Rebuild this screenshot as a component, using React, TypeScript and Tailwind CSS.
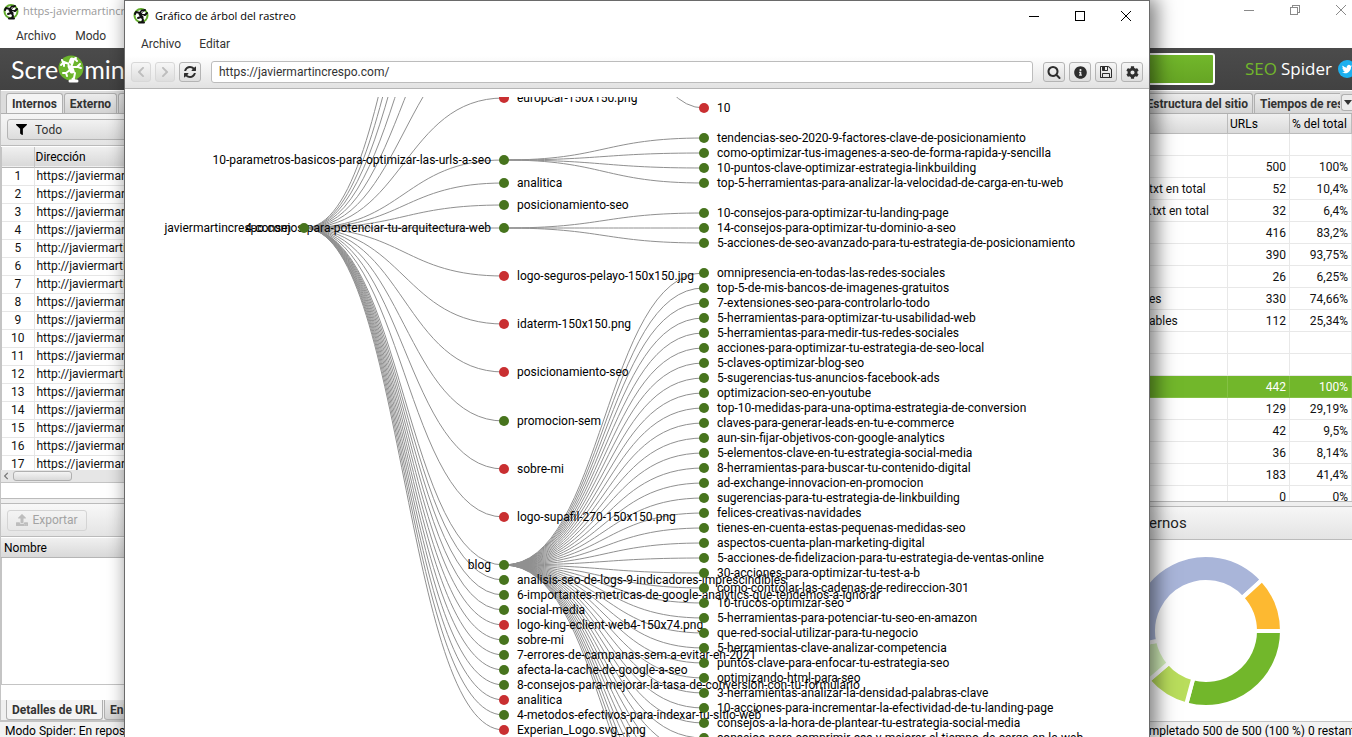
import { useState, type ReactNode } from "react";
import { FaChevronLeft, FaChevronRight, FaCog, FaFilter, FaInfoCircle, FaUpload } from "react-icons/fa";

type Status = "ok" | "error";
type TreeNode = { label: string; y: number; status?: Status; children?: TreeNode[] };

const ROW = 15;

// Builds evenly spaced leaves, starting at the given y
function leaves(start: number, labels: string[]): TreeNode[] {
  return labels.map((label, i) => ({ label, y: start + i * ROW }));
}

const BLOG_POSTS = [
  "omnipresencia-en-todas-las-redes-sociales",
  "top-5-de-mis-bancos-de-imagenes-gratuitos",
  "7-extensiones-seo-para-controlarlo-todo",
  "5-herramientas-para-optimizar-tu-usabilidad-web",
  "5-herramientas-para-medir-tus-redes-sociales",
  "acciones-para-optimizar-tu-estrategia-de-seo-local",
  "5-claves-optimizar-blog-seo",
  "5-sugerencias-tus-anuncios-facebook-ads",
  "optimizacion-seo-en-youtube",
  "top-10-medidas-para-una-optima-estrategia-de-conversion",
  "claves-para-generar-leads-en-tu-e-commerce",
  "aun-sin-fijar-objetivos-con-google-analytics",
  "5-elementos-clave-en-tu-estrategia-social-media",
  "8-herramientas-para-buscar-tu-contenido-digital",
  "ad-exchange-innovacion-en-promocion",
  "sugerencias-para-tu-estrategia-de-linkbuilding",
  "felices-creativas-navidades",
  "tienes-en-cuenta-estas-pequenas-medidas-seo",
  "aspectos-cuenta-plan-marketing-digital",
  "5-acciones-de-fidelizacion-para-tu-estrategia-de-ventas-online",
  "30-acciones-para-optimizar-tu-test-a-b",
  "como-controlar-las-cadenas-de-redireccion-301",
  "10-trucos-optimizar-seo",
  "5-herramientas-para-potenciar-tu-seo-en-amazon",
  "que-red-social-utilizar-para-tu-negocio",
  "5-herramientas-clave-analizar-competencia",
  "puntos-clave-para-enfocar-tu-estrategia-seo",
  "optimizando-html-para-seo",
  "3-herramientas-analizar-la-densidad-palabras-clave",
  "10-acciones-para-incrementar-la-efectividad-de-tu-landing-page",
  "consejos-a-la-hora-de-plantear-tu-estrategia-social-media",
  "consejos-para-comprimir-css-y-mejorar-el-tiempo-de-carga-en-la-web",
];

// Links that run to nodes scrolled out of view
const ROOT_OFFSCREEN = [-61, -124, -187, -249, -310, -372];
const BLOG_OFFSCREEN = [656, 671, 686, 701, 716, 731, 746, 761];

const ROOT: TreeNode = {
  label: "javiermartincrespo.com",
  y: 131,
  children: [
    { label: "europcar-150x150.png", y: 1, status: "error" },
    {
      label: "10-parametros-basicos-para-optimizar-las-urls-a-seo",
      y: 63,
      children: leaves(41, [
        "tendencias-seo-2020-9-factores-clave-de-posicionamiento",
        "como-optimizar-tus-imagenes-a-seo-de-forma-rapida-y-sencilla",
        "10-puntos-clave-optimizar-estrategia-linkbuilding",
        "top-5-herramientas-para-analizar-la-velocidad-de-carga-en-tu-web",
      ]),
    },
    { label: "analitica", y: 86 },
    { label: "posicionamiento-seo", y: 108 },
    {
      label: "4-consejos-para-potenciar-tu-arquitectura-web",
      y: 131,
      children: leaves(116, [
        "10-consejos-para-optimizar-tu-landing-page",
        "14-consejos-para-optimizar-tu-dominio-a-seo",
        "5-acciones-de-seo-avanzado-para-tu-estrategia-de-posicionamiento",
      ]),
    },
    { label: "logo-seguros-pelayo-150x150.jpg", y: 179, status: "error" },
    { label: "idaterm-150x150.png", y: 227, status: "error" },
    { label: "posicionamiento-seo", y: 275, status: "error" },
    { label: "promocion-sem", y: 324 },
    { label: "sobre-mi", y: 372, status: "error" },
    { label: "logo-supafil-270-150x150.png", y: 420, status: "error" },
    { label: "blog", y: 468, children: leaves(176, BLOG_POSTS) },
    { label: "analisis-seo-de-logs-9-indicadores-imprescindibles", y: 483 },
    { label: "6-importantes-metricas-de-google-analytics-que-tendemos-a-ignorar", y: 498 },
    { label: "social-media", y: 513 },
    { label: "logo-king-eclient-web4-150x74.png", y: 528, status: "error" },
    { label: "sobre-mi", y: 543 },
    { label: "7-errores-de-campanas-sem-a-evitar-en-2021", y: 558 },
    { label: "afecta-la-cache-de-google-a-seo", y: 573 },
    { label: "8-consejos-para-mejorar-la-tasa-de-conversion-con-tu-formulario", y: 588 },
    { label: "analitica", y: 603, status: "error" },
    { label: "4-metodos-efectivos-para-indexar-tu-sitio-web", y: 618 },
    { label: "Experian_Logo.svg_.png", y: 633, status: "error" },
  ],
};

const COLUMN_X = [179, 379, 579];

function Link({ depth, from, to }: { depth: number; from: number; to: number }) {
  const x0 = COLUMN_X[depth];
  const x1 = COLUMN_X[depth + 1];
  const mid = (x0 + x1) / 2;
  return <path d={`M${x0},${from}C${mid},${from} ${mid},${to} ${x1},${to}`} />;
}

function Node({ node, depth }: { node: TreeNode; depth: number }) {
  const x = COLUMN_X[depth];
  const parent = Boolean(node.children);
  return (
    <g>
      <circle cx={x} cy={node.y} r={5} fill={node.status === "error" ? "#c92f31" : "#47741d"} />
      <text x={parent ? x - 13 : x + 13} y={node.y + 4} textAnchor={parent ? "end" : "start"}>
        {node.label}
      </text>
    </g>
  );
}

function CrawlTree() {
  const children = ROOT.children ?? [];
  return (
    <svg className="block h-full w-full text-xs" role="img" aria-label="Gráfico de árbol del rastreo">
      <g fill="none" stroke="#909090" strokeWidth={1}>
        {ROOT_OFFSCREEN.map((y) => (
          <Link key={y} depth={0} from={ROOT.y} to={y} />
        ))}
        {children.map((c) => (
          <Link key={c.y} depth={0} from={ROOT.y} to={c.y} />
        ))}
        {children.flatMap((c) =>
          (c.children ?? []).map((l) => <Link key={l.y} depth={1} from={c.y} to={l.y} />),
        )}
        {BLOG_OFFSCREEN.map((y) => (
          <Link key={y} depth={1} from={468} to={y} />
        ))}
        <Link depth={1} from={-372} to={11} />
      </g>
      <g fill="#000">
        {children.map((c) => (
          <Node key={c.y} node={c} depth={1} />
        ))}
        <Node node={ROOT} depth={0} />
        <Node node={{ label: "10", y: 11, status: "error" }} depth={2} />
        {children.flatMap((c) => (c.children ?? []).map((l) => <Node key={l.y} node={l} depth={2} />))}
      </g>
    </svg>
  );
}

// White frog climbing over the green disc of the logo
function FrogMark({ className }: { className: string }) {
  return (
    <svg viewBox="0 0 26 28" className={className} aria-hidden="true">
      <circle cx="13" cy="13" r="12.5" fill="#6cb52d" />
      <g fill="none" stroke="#fff" strokeLinecap="round" strokeLinejoin="round">
        <path d="M14 5l-2 6 2 5" strokeWidth="5" />
        <path d="M11 9L6 7l-3 3M5 7L4 5M6 8l0 3" strokeWidth="2" />
        <path d="M14 12l5 0 3-3M20 12l3 1M14 5l4-2M17 4l2 2" strokeWidth="2" />
        <path d="M12 15l-4 3 1 3M8 18l-3 0M14 16l3 2-1 5" strokeWidth="2" />
        <path d="M12 26l7 0M15 24l1 1" strokeWidth="3" />
      </g>
      <path d="M11 8l2 1-1 2zM12 19l2 0-1 3-3 1z" fill="#6cb52d" />
    </svg>
  );
}

// Small frog of the title bars: black silhouette inside a broken green ring
function AppIcon() {
  return (
    <svg viewBox="0 0 16 16" className="h-4 w-4 shrink-0" aria-hidden="true">
      <circle cx="8" cy="7.500" r="6.500" fill="#fff" stroke="#62ad2b" strokeWidth="2" />
      <g fill="none" stroke="#111" strokeLinecap="round" strokeLinejoin="round">
        <path d="M9 3L7 6l2 3" strokeWidth="3" />
        <path d="M7 5L3 4 2 6M9 7l3 0 2-2M9 3l3-1" strokeWidth="2" />
        <path d="M8 9l-3 1M9 9l1 3-1 2M6 14.500l5 0" strokeWidth="2" />
      </g>
      <path d="M8 4l2-1-1 2zM9 7l2 0-1 1z" fill="#fff" />
    </svg>
  );
}

function Glyph({ d, className = "h-4 w-4" }: { d: string; className?: string }) {
  return (
    <svg viewBox="0 0 1792 1792" fill="currentColor" className={className} aria-hidden="true">
      <path d={d} />
    </svg>
  );
}

const REFRESH =
  "M1639 1056q0 5-1 7-64 268-268 434.5t-478 166.5q-146 0-282.5-55t-243.5-157l-129 129q-19 19-45 19t-45-19-19-45v-448q0-26 19-45t45-19h448q26 0 45 19t19 45-19 45l-137 137q71 66 161 102t187 36q134 0 250-65t186-179q11-17 53-117 8-23 30-23h192q13 0 22.5 9.5t9.5 22.5zm25-800v448q0 26-19 45t-45 19h-448q-26 0-45-19t-19-45 19-45l138-138q-148-137-349-137-134 0-250 65t-186 179q-11 17-53 117-8 23-30 23h-199q-13 0-22.5-9.5t-9.5-22.5v-7q65-268 270-434.5t480-166.5q146 0 284 55.5t245 156.5l130-129q19-19 45-19t45 19 19 45z";
const SEARCH =
  "M1216 832q0-185-131.5-316.5t-316.5-131.5-316.5 131.5-131.5 316.5 131.5 316.5 316.5 131.5 316.5-131.5 131.5-316.5zm512 832q0 52-38 90t-90 38q-54 0-90-38l-343-342q-179 124-399 124-143 0-273.5-55.5t-225-150-150-225-55.5-273.5 55.5-273.5 150-225 225-150 273.5-55.5 273.5 55.5 225 150 150 225 55.5 273.5q0 220-124 399l343 343q37 37 37 90z";
const FLOPPY =
  "M512 1536h768v-384h-768v384zm896 0h128v-896q0-14-10-38.5t-20-34.5l-281-281q-10-10-34-20t-39-10v416q0 40-28 68t-68 28h-576q-40 0-68-28t-28-68v-416h-128v1280h128v-416q0-40 28-68t68-28h832q40 0 68 28t28 68v416zm-384-928v-320q0-13-9.5-22.5t-22.5-9.5h-192q-13 0-22.5 9.5t-9.5 22.5v320q0 13 9.5 22.5t22.5 9.5h192q13 0 22.5-9.5t9.5-22.5zm640 32v928q0 40-28 68t-68 28h-1344q-40 0-68-28t-28-68v-1344q0-40 28-68t68-28h928q40 0 88 20t76 48l280 280q28 28 48 76t20 88z";

function ToolButton({ label, disabled, children }: { label: string; disabled?: boolean; children: ReactNode }) {
  return (
    <button
      type="button"
      aria-label={label}
      disabled={disabled}
      className="flex h-5 w-[22px] items-center justify-center rounded-[3px] border border-[#b4b4b4] bg-linear-to-b from-[#f6f6f6] to-[#dedede] text-[#2e2e2e] disabled:w-5 disabled:border-[#d8d8d8] disabled:text-[#bdbdbd]"
    >
      {children}
    </button>
  );
}

function WindowButtons({ restored, className }: { restored?: boolean; className: string }) {
  return (
    <div className={className}>
      <button type="button" aria-label="Minimizar" className="flex w-[46px] items-center justify-center">
        <svg viewBox="0 0 12 12" className="h-3 w-3" stroke="currentColor" shapeRendering="crispEdges">
          <path d="M1 6.500h10" />
        </svg>
      </button>
      <button type="button" aria-label="Maximizar" className="flex w-[46px] items-center justify-center">
        <svg viewBox="0 0 12 12" className="h-3 w-3" stroke="currentColor" fill="none" shapeRendering="crispEdges">
          {restored ? <path d="M1.500 3.500h7v7h-7zM3.500 3.500v-2h7v7h-2" /> : <path d="M1.500 1.500h9v9h-9z" />}
        </svg>
      </button>
      <button type="button" aria-label="Cerrar" className="flex w-[46px] items-center justify-center">
        <svg viewBox="0 0 12 12" className="h-3 w-3" stroke="currentColor">
          <path d="M1 1l10 10M11 1L1 11" />
        </svg>
      </button>
    </div>
  );
}

function TreeWindow() {
  const [url, setUrl] = useState("https://javiermartincrespo.com/");
  return (
    <section className="absolute inset-y-0 left-[124px] right-[202px] flex flex-col overflow-hidden border-x border-t border-[#6a6a6a] bg-white shadow-[5px_0_18px_2px_rgba(0,0,0,0.5)]">
      <header className="flex h-[30px] shrink-0 items-center justify-between pl-2">
        <div className="flex items-center gap-1.5">
          <AppIcon />
          <h1 className="font-['Open_Sans',sans-serif] text-[11px] text-black">Gráfico de árbol del rastreo</h1>
        </div>
        <WindowButtons className="flex text-black" />
      </header>
      <nav className="flex h-[25px] shrink-0 items-center gap-[18px] pl-4 text-[#333]">
        <button type="button">Archivo</button>
        <button type="button">Editar</button>
      </nav>
      <div className="flex h-[33px] shrink-0 items-center gap-2.5 border-b border-[#b5b5b5] bg-linear-to-b from-white to-[#e2e2e2] px-1.5">
        <div className="flex gap-1">
          <ToolButton label="Atrás" disabled>
            <FaChevronLeft className="h-3 w-3" />
          </ToolButton>
          <ToolButton label="Adelante" disabled>
            <FaChevronRight className="h-3 w-3" />
          </ToolButton>
          <ToolButton label="Recargar">
            <Glyph d={REFRESH} className="h-[14px] w-[14px]" />
          </ToolButton>
        </div>
        <input
          aria-label="Dirección"
          value={url}
          onChange={(e) => setUrl(e.target.value)}
          className="h-[22px] min-w-0 flex-1 rounded-[3px] border border-[#bcbcbc] bg-white px-[7px] text-[#333] outline-none"
        />
        <div className="flex gap-1">
          <ToolButton label="Buscar">
            <Glyph d={SEARCH} className="h-[14px] w-[14px]" />
          </ToolButton>
          <ToolButton label="Información">
            <FaInfoCircle className="h-[13px] w-[13px]" />
          </ToolButton>
          <ToolButton label="Guardar">
            <Glyph d={FLOPPY} className="h-[14px] w-[14px]" />
          </ToolButton>
          <ToolButton label="Configuración">
            <FaCog className="h-[13px] w-[13px]" />
          </ToolButton>
        </div>
      </div>
      <div className="min-h-0 flex-1 pt-2">
        <CrawlTree />
      </div>
    </section>
  );
}

const HTTP_ROWS = [5, 6, 7, 12];
const URL_ROWS = Array.from({ length: 17 }, (_, i) => ({
  id: i + 1,
  url: `${HTTP_ROWS.includes(i + 1) ? "http" : "https"}://javiermartincrespo.com/`,
}));

function Tab({ active, up, children }: { active?: boolean; up?: boolean; children: ReactNode }) {
  const tone = active ? "bg-[#f4f4f4]" : "bg-linear-to-b from-[#ececec] to-[#d4d4d4]";
  const edge = up ? "rounded-b-[3px] border-b" : "rounded-t-[3px] border-t";
  return (
    <button
      type="button"
      className={`${tone} ${edge} h-5 shrink-0 border-x border-[#b0b0b0] px-[5px] font-bold whitespace-nowrap text-[#333]`}
    >
      {children}
    </button>
  );
}

function LeftPane() {
  return (
    <div className="flex min-w-0 flex-1 flex-col overflow-hidden border-l border-[#c4c4c4]">
      <div className="flex h-6 shrink-0 items-end gap-px border-y border-t-white border-b-[#b0b0b0] bg-[#dcdcdc] pl-[5px]">
        <Tab active>Internos</Tab>
        <Tab>Externo</Tab>
        <Tab>Seguridad</Tab>
      </div>
      <div className="flex h-8 shrink-0 items-center border-b border-[#bbb] bg-linear-to-b from-[#f6f6f6] to-[#e4e4e4] px-1.5">
        <label className="flex h-[21px] w-48 items-center gap-2 rounded-[3px] border border-[#b4b4b4] bg-linear-to-b from-[#f2f2f2] to-[#dcdcdc] px-2">
          <FaFilter className="h-[11px] w-[11px] text-black" />
          <select aria-label="Filtro" className="flex-1 appearance-none bg-transparent text-[#333] outline-none">
            <option>Todo</option>
          </select>
        </label>
      </div>
      <div className="mt-px h-[323px] shrink-0 overflow-hidden border-l border-[#c4c4c4]">
        <table className="w-full table-fixed border-collapse">
          <thead>
            <tr className="h-5 border-b border-[#b5b5b5] bg-linear-to-b from-[#f0f0f0] to-[#d9d9d9] text-left text-black">
              <th className="w-8 border-r border-[#c4c4c4]" aria-label="Fila" />
              <th className="px-px py-0 font-normal">Dirección</th>
            </tr>
          </thead>
          <tbody>
            {URL_ROWS.map((row) => (
              <tr key={row.id} className="h-[18px] border-b border-[#e6e6e6] leading-4">
                <td className="border-r border-[#e6e6e6] p-0 text-center">{row.id}</td>
                <td className="p-0 pl-0.5 whitespace-nowrap">{row.url}</td>
              </tr>
            ))}
          </tbody>
        </table>
      </div>
      <div className="flex h-[13px] shrink-0 items-center gap-[3px] border-b border-[#c4c4c4] bg-[#e6e6e6] pl-px text-[#777]">
        <FaChevronLeft className="h-2 w-2" />
        <div className="h-[10px] w-[59px] rounded-[3px] border border-[#b0b0b0] bg-linear-to-b from-[#f4f4f4] to-[#dadada]" />
      </div>
      <div className="h-[15px] shrink-0" />
      <div className="h-[6px] shrink-0 border-y border-[#bbb] bg-[#efefef]" />
      <div className="flex h-[33px] shrink-0 items-center border-b border-[#bbb] bg-linear-to-b from-[#f8f8f8] to-[#e4e4e4] pl-1.5">
        <button
          type="button"
          disabled
          className="flex h-[21px] w-20 items-center justify-center gap-1 rounded-[3px] border border-[#d4d4d4] text-[#a3a3a3]"
        >
          <FaUpload className="h-3 w-3 text-[#bdbdbd]" />
          Exportar
        </button>
      </div>
      <div className="mt-px flex h-5 shrink-0 items-center border-b border-[#b5b5b5] bg-linear-to-b from-[#f0f0f0] to-[#d9d9d9] pt-px pl-[3px] text-black">
        Nombre
      </div>
      <div className="min-h-0 flex-1 border-b border-l border-[#c4c4c4]" />
      <div className="h-[15px] shrink-0" />
      <div className="flex h-[22px] shrink-0 items-start gap-px border-b-2 border-[#c4c4c4] bg-[#f0f0f0] pl-[5px]">
        <Tab active up>
          Detalles de URL
        </Tab>
        <Tab up>Enlaces entrantes</Tab>
      </div>
    </div>
  );
}

const SUMMARY: { name?: string; urls?: string; share?: string; selected?: boolean }[] = [
  {},
  { urls: "500", share: "100%" },
  { name: "txt en total", urls: "52", share: "10,4%" },
  { name: ".txt en total", urls: "32", share: "6,4%" },
  { urls: "416", share: "83,2%" },
  { urls: "390", share: "93,75%" },
  { urls: "26", share: "6,25%" },
  { name: "es", urls: "330", share: "74,66%" },
  { name: "ables", urls: "112", share: "25,34%" },
  {},
  {},
  { urls: "442", share: "100%", selected: true },
  { urls: "129", share: "29,19%" },
  { urls: "42", share: "9,5%" },
  { urls: "36", share: "8,14%" },
  { urls: "183", share: "41,4%" },
  { urls: "0", share: "0%" },
];

const SLICES = [
  { color: "#72b72b", value: 129 },
  { color: "#b9dd5c", value: 42 },
  { color: "#d3efb9", value: 36 },
  { color: "#a9b5d9", value: 183 },
  { color: "#fdb931", value: 52 },
];

function Donut({ cx, cy }: { cx: number; cy: number }) {
  const total = SLICES.reduce((sum, s) => sum + s.value, 0);
  const point = (r: number, a: number) => `${(cx + r * Math.cos(a)).toFixed(2)} ${(cy + r * Math.sin(a)).toFixed(2)}`;
  let angle = 0;
  return (
    <svg className="h-full w-full" role="img" aria-label="Internos">
      {SLICES.map((s) => {
        const a0 = angle;
        const a1 = angle + (s.value / total) * Math.PI * 2;
        angle = a1;
        const big = a1 - a0 > Math.PI ? 1 : 0;
        return (
          <path
            key={s.color}
            d={`M${point(76, a0)}A76 76 0 ${big} 1 ${point(76, a1)}L${point(49, a1)}A49 49 0 ${big} 0 ${point(49, a0)}Z`}
            fill={s.color}
            stroke="#fff"
            strokeWidth={4}
          />
        );
      })}
    </svg>
  );
}

function RightPane() {
  return (
    <div className="flex w-[203px] shrink-0 flex-col overflow-hidden">
      <div className="flex h-6 shrink-0 items-end border-y border-t-white border-b-[#b0b0b0] bg-[#dcdcdc]">
        <div className="flex min-w-0 flex-1 gap-px overflow-hidden">
          <button
            type="button"
            className="flex h-5 w-[104px] shrink-0 items-center justify-end rounded-tr-[3px] border-t border-r border-[#b0b0b0] bg-linear-to-b from-[#ececec] to-[#d4d4d4] pr-1 font-bold whitespace-nowrap text-[#333]"
          >
            Estructura del sitio
          </button>
          <Tab>Tiempos de respuesta</Tab>
        </div>
        <button
          type="button"
          aria-label="Más pestañas"
          className="ml-px flex h-[17px] w-[11px] items-center justify-end self-center rounded-l-[3px] border border-r-0 border-[#b0b0b0] bg-[#ececec] text-[#333]"
        >
          <svg viewBox="0 0 8 5" className="h-[5px] w-2" aria-hidden="true">
            <path d="M0 0h8L4 5z" fill="currentColor" />
          </svg>
        </button>
      </div>
      <div className="h-[387px] shrink-0 overflow-hidden">
        <table className="w-full table-fixed border-separate border-spacing-0">
          <thead>
            <tr className="h-5 bg-linear-to-b from-[#f0f0f0] to-[#d9d9d9] text-left text-black [&>th]:border-r [&>th]:border-b [&>th]:border-[#bbb] [&>th]:px-0.5 [&>th]:py-0 [&>th]:font-normal">
              <th aria-label="Elemento" />
              <th className="w-[62px]">URLs</th>
              <th className="w-[62px] whitespace-nowrap">% del total</th>
            </tr>
          </thead>
          <tbody>
            {SUMMARY.map((row, i) => (
              <tr
                key={i}
                className={
                  row.selected
                    ? "h-[22px] bg-[#72b72b] text-white [&>td]:border-r [&>td]:border-b [&>td]:border-[#84c144] [&>td]:py-0"
                    : "h-[22px] [&>td]:border-r [&>td]:border-b [&>td]:border-[#e8e8e8] [&>td]:py-0"
                }
              >
                <td className="px-0 whitespace-nowrap">{row.name}</td>
                <td className="px-[3px] text-right">{row.urls}</td>
                <td className="px-[3px] text-right">{row.share}</td>
              </tr>
            ))}
          </tbody>
        </table>
      </div>
      <div className="h-[6px] shrink-0 border-y border-[#bbb] bg-[#efefef]" />
      <h2 className="flex h-[33px] shrink-0 items-center border-b border-[#bbb] bg-linear-to-b from-[#f6f6f6] to-[#e4e4e4] pt-0.5 text-[15px] text-[#222]">
        ernos
      </h2>
      <div className="min-h-0 flex-1 border-b border-[#c4c4c4]">
        <Donut cx={57} cy={91} />
      </div>
    </div>
  );
}

function Banner() {
  return (
    <div className="flex h-[42px] shrink-0 items-center bg-linear-to-b from-[#4b4b4b] to-[#424242] pl-[11px] font-['Open_Sans',sans-serif] text-white">
      <div className="flex items-center font-['Lato',sans-serif] text-[25px] leading-8">
        <span>Scre</span>
        <FrogMark className="h-7 w-[26px]" />
        <span>ming</span>
      </div>
      <div className="ml-8 flex min-w-0 flex-1 justify-end">
        <button
          type="button"
          aria-label="Iniciar"
          className="h-8 w-28 rounded-[3px] border-2 border-white bg-linear-to-b from-[#72b72b] to-[#66a524]"
        />
      </div>
      <div className="flex w-[137px] shrink-0 items-center gap-1 pl-[30px] text-[17px]">
        <span className="text-[#72b72b]">SEO</span>
        <span>Spider</span>
        <a href="#twitter" aria-label="Twitter" className="ml-0.5 block h-[18px] w-[18px] shrink-0">
          <svg viewBox="0 0 18 18" className="h-full w-full">
            <circle cx="9" cy="9" r="9" fill="#1cb0ef" />
            <path
              d="M14 6.200c-.4.200-.800.300-1.200.300.400-.300.800-.700.900-1.200-.4.200-.800.400-1.300.5a2 2 0 0 0-3.500 1.900A5.800 5.800 0 0 1 4.600 5.500a2 2 0 0 0 .7 2.700c-.4 0-.700-.1-1-.3 0 1 .7 1.800 1.700 2-.3.1-.6.1-.9 0 .2.900 1 1.500 1.900 1.500A4.200 4.200 0 0 1 4 12.300a5.900 5.900 0 0 0 9-5.200c.4-.3.800-.6 1-.9z"
              fill="#fff"
            />
          </svg>
        </a>
      </div>
    </div>
  );
}

export default function App() {
  return (
    <main className="relative flex h-screen flex-col overflow-hidden bg-white font-['Roboto',sans-serif] text-xs text-[#111]">
      <header className="flex h-[23px] shrink-0 items-center justify-between pl-[3px]">
        <div className="flex items-center gap-1 text-[#999]">
          <AppIcon />
          <span className="font-['Open_Sans',sans-serif] text-[11px]">https-javiermartincrespo</span>
        </div>
        <WindowButtons restored className="-mr-3 flex pb-1 text-[#8a8a8a]" />
      </header>
      <nav className="flex h-[25px] shrink-0 items-center gap-[19px] pl-4 text-[#333]">
        <button type="button">Archivo</button>
        <button type="button">Modo</button>
        <button type="button">Configuración</button>
      </nav>
      <Banner />
      <div className="flex min-h-0 flex-1">
        <LeftPane />
        <RightPane />
      </div>
      <footer className="flex h-[15px] shrink-0 items-center justify-between bg-[#f2f2f2] pt-0.5 pl-[5px] text-black">
        <span>Modo Spider: En reposo</span>
        <span className="w-[218px] overflow-hidden whitespace-nowrap">Completado 500 de 500 (100 %) 0 restantes</span>
      </footer>
      <TreeWindow />
    </main>
  );
}
